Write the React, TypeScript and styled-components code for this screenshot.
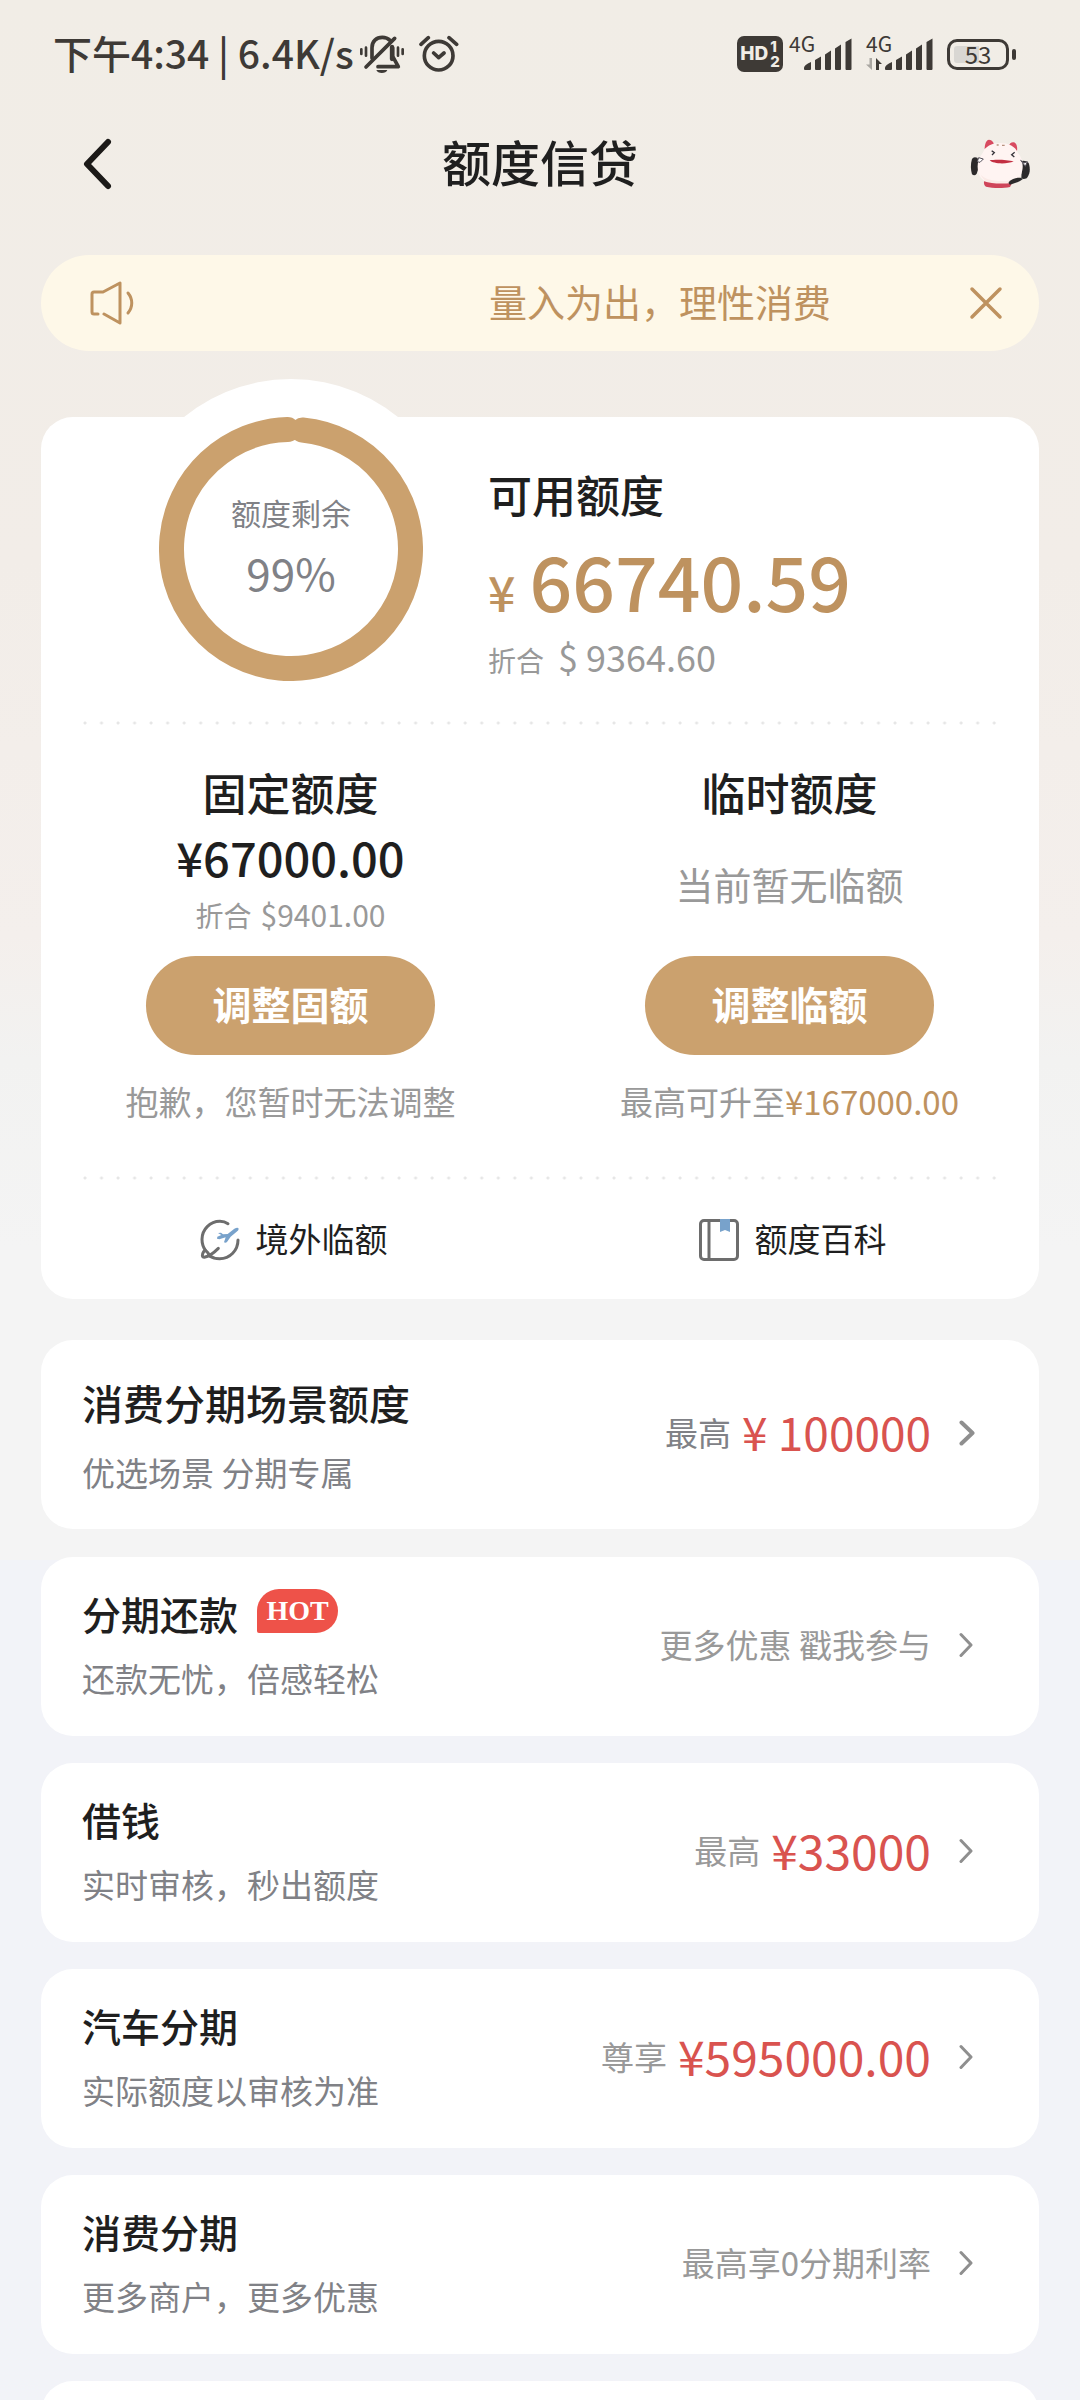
import React from 'react';
import styled, { createGlobalStyle } from 'styled-components';

const color = {
  ink: '#1f1f1f',
  status: '#3e3a36',
  gold: '#cba16e',
  goldText: '#be925f',
  slate: '#808186',
  grey: '#999999',
  red: '#d9534f',
};

const GlobalStyle = createGlobalStyle`
  *, *::before, *::after { box-sizing: border-box; }
  body {
    margin: 0;
    background: #f2f3f8;
    font-family: "Noto Sans CJK SC", "Noto Sans", sans-serif;
    color: ${color.ink};
  }
  h1, h2, h3, p { margin: 0; font-weight: inherit; font-size: inherit; }
  button { font: inherit; color: inherit; border: 0; padding: 0; background: none; cursor: pointer; }
  a { color: inherit; text-decoration: none; }
  svg { display: block; flex: none; }
`;

const Screen = styled.div`
  display: flex;
  flex-direction: column;
  height: 100vh;
  overflow-y: auto;
  scrollbar-width: none;
  background: #f2f3f8
    linear-gradient(#f1ede6 0%, #f2ede8 36%, #f4efec 60%, #f2f2f1 68%, #f4f4f4 80%, #f4f4f4 100%)
    no-repeat top / 100% 1560px;
`;

/* ---------- status bar ---------- */

const StatusBar = styled.div`
  display: flex;
  flex: none;
  align-items: center;
  justify-content: space-between;
  height: 108px;
  padding: 0 64px 0 53px;
  color: ${color.status};
`;

const StatusGroup = styled.div<{ $gap: number }>`
  display: flex;
  align-items: center;
  gap: ${(p) => p.$gap}px;
`;

const StatusText = styled.span`
  padding-bottom: 4px;
  font-size: 39px;
  line-height: 48px;
  font-weight: 500;
  white-space: nowrap;
`;

const HdBadge = styled.span`
  display: flex;
  align-items: center;
  justify-content: center;
  gap: 2px;
  width: 46px;
  height: 36px;
  margin-right: 6px;
  border-radius: 7px;
  background: ${color.status};
  color: #f1ede6;
  font-family: Inter, sans-serif;
  font-size: 19px;
  line-height: 36px;
  font-weight: 800;
`;

const HdStack = styled.span`
  display: flex;
  flex-direction: column;
  font-size: 15px;
  line-height: 15px;
`;

const Signal = styled.span`
  position: relative;
  display: block;
  margin-right: 14px;
`;

const SignalLabel = styled.span`
  position: absolute;
  top: -5px;
  left: 0;
  font-size: 21px;
  line-height: 24px;
`;

const Battery = styled.span`
  display: flex;
  align-items: center;
  gap: 3px;
  &::after {
    content: '';
    width: 4px;
    height: 11px;
    border-radius: 2px;
    background: ${color.status};
  }
`;

const BatteryShell = styled.span`
  display: block;
  width: 62px;
  height: 31px;
  border: 3px solid ${color.status};
  border-radius: 10px;
  background: linear-gradient(90deg, #d9d7d3 53%, transparent 53%) content-box;
  padding: 4px;
  font-size: 24px;
  line-height: 16px;
  text-align: center;
`;

function BellOffIcon() {
  return (
    <svg width="46" height="40" viewBox="30 27 138 120" fill="none" stroke={color.status} strokeWidth="11" strokeLinecap="round" strokeLinejoin="round">
      <path d="M34 73v14M48 68v24M144 68v24M158 73v14" strokeWidth="8" />
      <path d="M66 100V68c0-19 13-31 31-31 9 0 17 3 23 9" />
      <path d="M134 40 48 126" />
      <path d="M128 68v26l17 31H84" />
      <path d="M126 66v36" strokeWidth="13" />
      <path d="M79 135h33c-3 12-30 12-33 0z" fill={color.status} stroke="none" />
    </svg>
  );
}

function AlarmIcon() {
  return (
    <svg width="40" height="38" viewBox="207 30 120 114" fill="none" stroke={color.status} strokeWidth="11" strokeLinecap="round" strokeLinejoin="round">
      <circle cx="266" cy="92" r="43" />
      <path d="m251 84 15 14 16-14M213 58l22-20M297 38l23 20" />
    </svg>
  );
}

function SignalIcon({ arrows }: { arrows?: boolean }) {
  return (
    <svg width={arrows ? 67 : 63} height="36" viewBox={arrows ? '0 0 67 36' : '4 0 63 36'} fill={color.status}>
      {arrows && (
        <>
          <path d="M6 22v12L0 28.500h3.500V22z" fill="#aaa7a2" />
          <path d="M10 34V22l6 6h-3v6z" />
        </>
      )}
      <path d="M19 32q0-3 7-6v7q0 1-1 1h-5q-1 0-1-1zM30 24l6-3.500V33q0 1-1 1h-4q-1 0-1-1zM40 18.500l6-4V33q0 1-1 1h-4q-1 0-1-1zM50 12.500l6-4V33q0 1-1 1h-4q-1 0-1-1zM60.500 6l6-3.500V33q0 1-1 1h-4q-1 0-1-1z" />
    </svg>
  );
}

/* ---------- title bar ---------- */

const TitleBar = styled.header`
  display: grid;
  flex: none;
  grid-template-columns: 1fr auto 1fr;
  align-items: center;
  height: 112px;
  padding: 0 48px 0 80px;
`;

const PageTitle = styled.h1`
  margin: 0 16px 6px -16px;
  font-size: 49px;
  line-height: 60px;
  font-weight: 500;
`;

const IconButton = styled.button<{ $end?: boolean }>`
  display: flex;
  justify-self: ${(p) => (p.$end ? 'end' : 'start')};
`;

function MascotIcon() {
  return (
    <svg width="62" height="52" viewBox="18 21 186 156">
      <path d="M40 80q-12-4-16 4c-5 16-4 32 0 46q8 6 14-2l10-30z" fill="#2b2a2b" />
      <path d="M174 90q12-2 20 6c6 18 4 34-6 46q-10 4-16 0z" fill="#2b2a2b" />
      <path d="M62 54c0-16 5-27 13-28 9 0 16 9 16 20zM134 46c2-8 8-13 15-12 8 2 12 12 10 26z" fill="#d84a60" />
      <path d="M108 36c26 0 46 10 54 30 14 16 18 42 10 62-6 18-28 32-66 32-36 0-56-14-62-32-7-24-2-46 12-62 8-20 26-30 52-30z" fill="#fff4f2" />
      <path d="M50 130c12 22 90 30 118 4-8 18-28 26-62 26-32 0-50-12-56-30z" fill="#fbeae6" />
      <path d="M60 151c22 8 56 8 84 5l-6 12c-20 4-52 4-72-1-5-3-7-9-6-16z" fill="#cf4459" />
      <path d="M135 152c8-8 20-12 32-12 4 0 8 2 9 5-10 8-22 12-38 16-4-2-5-6-3-9z" fill="#2b2a2b" />
      <path d="M77 88c16-3 52-2 72 3-18 9-60 9-72-3z" fill="#c32f42" />
      <path d="m83 59 8 6-7 7M152 64l-9 7 8 7" fill="none" stroke="#37343a" strokeWidth="4" />
      <path d="M98 42h6M114 43h8" stroke="#b7927e" strokeWidth="4" />
      <path d="m40 92 4-12 14 4-10 10zM170 88l10 8 10-4-6 14z" fill="#fff" stroke="#55505a" strokeWidth="3" />
    </svg>
  );
}

/* ---------- notice ---------- */

const Content = styled.main`
  display: flex;
  flex: none;
  flex-direction: column;
  padding: 35px 41px 0;
`;

const Notice = styled.div`
  display: flex;
  align-items: center;
  height: 96px;
  padding: 0 36px 0 48px;
  border-radius: 48px;
  background: #fef8e8;
  color: ${color.goldText};
`;

const NoticeText = styled.p`
  flex: 1;
  padding: 0 0 4px 354px;
  font-size: 38px;
  line-height: 48px;
  white-space: nowrap;
`;

/* ---------- credit card panel ---------- */

const Panel = styled.section`
  display: flex;
  flex-direction: column;
  margin-top: 66px;
  border-radius: 32px;
  background: #fff;
`;

const Summary = styled.div`
  display: flex;
  gap: 65px;
  padding-left: 118px;
`;

const Gauge = styled.div`
  position: relative;
  width: 264px;
  height: 264px;
  &::before {
    content: '';
    position: absolute;
    inset: -38px;
    border-radius: 50%;
    background: #fff;
  }
  svg { position: relative; }
`;

const GaugeLabel = styled.div`
  position: absolute;
  inset: 0;
  display: flex;
  flex-direction: column;
  align-items: center;
  padding-top: 73px;
  color: ${color.slate};
  font-size: 30px;
  line-height: 44px;
`;

const GaugeValue = styled.span`
  margin-top: 10px;
  font-size: 44px;
  line-height: 56px;
`;

const Available = styled.div`
  position: relative;
  padding-top: 47px;
`;

const Heading = styled.h2`
  font-size: 44px;
  line-height: 60px;
  font-weight: 500;
`;

const AvailableAmount = styled.p`
  display: flex;
  align-items: baseline;
  gap: 14px;
  height: 88px;
  margin-top: 12px;
  font-size: 75px;
  line-height: 88px;
  font-weight: 500;
  color: ${color.goldText};
`;

const Currency = styled.span`
  font-size: 48px;
  line-height: 48px;
`;

const Converted = styled.p<{ $wide?: boolean }>`
  display: flex;
  align-items: baseline;
  gap: ${(p) => (p.$wide ? 14 : 9)}px;
  height: 40px;
  margin-top: ${(p) => (p.$wide ? 16 : 8)}px;
  font-size: 28px;
  line-height: 40px;
  color: ${color.grey};
  span {
    font-size: ${(p) => (p.$wide ? 36 : 30)}px;
    line-height: 32px;
  }
`;

const DottedLine = styled.hr<{ $top: number }>`
  width: calc(100% - 84px);
  height: 4px;
  margin: ${(p) => p.$top}px auto 0;
  border: 0;
  background: radial-gradient(circle at 2px 2px, #e6e6e6 1px, transparent 2px) 0 0 / calc((100% - 4px) / 55) 4px;
`;

const Columns = styled.div`
  display: grid;
  grid-template-columns: 1fr 1fr;
`;

const Limit = styled.div`
  display: flex;
  flex-direction: column;
  align-items: center;
  padding-top: 37px;
`;

const LimitAmount = styled.p`
  margin-top: 5px;
  font-size: 47px;
  line-height: 60px;
  font-weight: 500;
`;

const EmptyLimit = styled.p`
  height: 113px;
  padding-top: 38px;
  font-size: 38px;
  line-height: 48px;
  color: ${color.grey};
`;

const PillButton = styled.button`
  width: 289px;
  height: 99px;
  margin-top: 21px;
  padding-bottom: 5px;
  border-radius: 50px;
  background: ${color.gold};
  color: #fff;
  font-size: 39px;
  font-weight: 700;
`;

const LimitNote = styled.p`
  margin-top: 22px;
  font-size: 33px;
  line-height: 48px;
  white-space: nowrap;
  color: ${color.grey};
  em { font-style: normal; color: ${color.goldText}; }
`;

const QuickLink = styled.a`
  display: flex;
  align-items: center;
  justify-content: center;
  gap: 16px;
  height: 119px;
  font-size: 33px;
  line-height: 48px;
`;

const QuickText = styled.span`
  margin-bottom: 4px;
`;

function PlaneIcon() {
  return (
    <svg width="46" height="42" viewBox="9 27 138 126" fill="none" stroke="#6d6d6d" strokeWidth="9" strokeLinecap="round" strokeLinejoin="round">
      <path d="M111 41C102 35 94 34 87 34 57 34 33 58 33 88c0 13 4 25 11 34" />
      <path d="M141 90c0 31-24 56-55 56-12 0-22-3-31-9" />
      <path d="M82 115c-13 13-27 24-42 27-7 0-8-8-2-17 4-6 10-4 18 13" />
      <path d="m81 69 9-1 6 5 14-1 20-16q12-6 13 1 0 4-7 9l-17 14-11 16q-4 4-9 1l5-15-19 6-7-2 1-6 12-5z" fill="#78a2cb" stroke="none" />
    </svg>
  );
}

function BookIcon() {
  return (
    <svg width="46" height="42" viewBox="0 0 46 42" fill="none">
      <rect x="7.500" y="1.500" width="37" height="39" rx="3.500" stroke="#6d6d6d" strokeWidth="3" />
      <path d="M16 2v38" stroke="#6d6d6d" strokeWidth="3" />
      <path d="M27 0h10v13l-5-2-5 2z" fill="#78a2cb" />
    </svg>
  );
}

/* ---------- product list ---------- */

const ProductList = styled.div`
  display: flex;
  flex-direction: column;
  gap: 27px;
  margin-top: 41px;
`;

const Product = styled.a<{ $featured?: boolean }>`
  display: flex;
  align-items: center;
  justify-content: space-between;
  min-height: ${(p) => (p.$featured ? 189 : 179)}px;
  margin-bottom: ${(p) => (p.$featured ? 1 : 0)}px;
  padding: 0 ${(p) => (p.$featured ? 64 : 66)}px 0 41px;
  border-radius: 32px;
  background: #fff;
`;

const ProductText = styled.div<{ $featured?: boolean }>`
  display: flex;
  flex-direction: column;
  gap: ${(p) => (p.$featured ? 22 : 17)}px;
  padding-bottom: ${(p) => (p.$featured ? 0 : 6)}px;
`;

const ProductTitle = styled.h3<{ $featured?: boolean }>`
  display: flex;
  gap: 19px;
  font-size: ${(p) => (p.$featured ? 41 : 39)}px;
  line-height: 52px;
  font-weight: 500;
`;

const HotBadge = styled.span`
  width: 81px;
  height: 44px;
  margin-top: 2px;
  border-radius: 22px 22px 22px 2px;
  background: #ee5249;
  color: #fff;
  font: 700 28px/44px "Liberation Serif", serif;
  text-align: center;
`;

const ProductSub = styled.p`
  font-size: 33px;
  line-height: 44px;
  color: ${color.slate};
`;

const Offer = styled.div<{ $featured?: boolean }>`
  display: flex;
  align-items: center;
  margin-bottom: 3px;
  font-size: 33px;
  line-height: 48px;
  color: ${(p) => (p.$featured ? color.slate : color.grey)};
  svg { margin-left: 28px; }
`;

const OfferLabel = styled.span`
  margin-bottom: 3px;
`;

const OfferAmount = styled.strong<{ $featured?: boolean }>`
  margin: 0 0 4px 11px;
  font-size: ${(p) => (p.$featured ? 46 : 48)}px;
  font-weight: 400;
  color: ${color.red};
`;

function Chevron({ bold }: { bold?: boolean }) {
  return (
    <svg width={bold ? 16 : 14} height="26" viewBox={bold ? '0 0 16 26' : '0 0 14 26'} fill="none" stroke="#8f8f8f" strokeWidth={bold ? 4 : 3} strokeLinecap="round" strokeLinejoin="round">
      <path d={bold ? 'M2.500 2.500 13.500 13 2.500 23.500' : 'M2 2.500 12 13 2 23.500'} />
    </svg>
  );
}

interface ProductInfo {
  title: string;
  sub: string;
  label: string;
  amount?: string;
  hot?: boolean;
  featured?: boolean;
}

const products: ProductInfo[] = [
  { title: '消费分期场景额度', sub: '优选场景 分期专属', label: '最高', amount: '¥ 100000', featured: true },
  { title: '分期还款', sub: '还款无忧，倍感轻松', label: '更多优惠 戳我参与', hot: true },
  { title: '借钱', sub: '实时审核，秒出额度', label: '最高', amount: '¥33000' },
  { title: '汽车分期', sub: '实际额度以审核为准', label: '尊享', amount: '¥595000.00' },
  { title: '消费分期', sub: '更多商户，更多优惠', label: '最高享0分期利率' },
];

export default function App() {
  return (
    <Screen>
      <GlobalStyle />
      <StatusBar>
        <StatusGroup $gap={6}>
          <StatusText>下午4:34 | 6.4K/s</StatusText>
          <StatusGroup $gap={13}>
            <BellOffIcon />
            <AlarmIcon />
          </StatusGroup>
        </StatusGroup>
        <StatusGroup $gap={0}>
          <HdBadge>
            HD
            <HdStack>
              <span>1</span>
              <span>2</span>
            </HdStack>
          </HdBadge>
          <Signal>
            <SignalIcon />
            <SignalLabel>4G</SignalLabel>
          </Signal>
          <Signal>
            <SignalIcon arrows />
            <SignalLabel>4G</SignalLabel>
          </Signal>
          <Battery>
            <BatteryShell>53</BatteryShell>
          </Battery>
        </StatusGroup>
      </StatusBar>

      <TitleBar>
        <IconButton type="button" aria-label="返回">
          <svg width="34" height="56" viewBox="0 0 34 56" fill="none" stroke="#1c1a18" strokeWidth="6" strokeLinecap="round" strokeLinejoin="round">
            <path d="M28 6 7 28l21 22" />
          </svg>
        </IconButton>
        <PageTitle>额度信贷</PageTitle>
        <IconButton type="button" aria-label="客服" $end>
          <MascotIcon />
        </IconButton>
      </TitleBar>

      <Content>
        <Notice>
          <svg width="46" height="44" viewBox="0 0 46 44" fill="none" stroke={color.goldText} strokeWidth="3" strokeLinecap="round" strokeLinejoin="round">
            <path d="M9 33H5q-2 0-2-2V13q0-2 2-2h9L31 2v40L15 33" />
            <path d="M39 12c5 6 5 14 0 20" />
          </svg>
          <NoticeText>量入为出，理性消费</NoticeText>
          <IconButton type="button" aria-label="关闭" $end>
            <svg width="34" height="34" viewBox="0 0 34 34" fill="none" stroke={color.goldText} strokeWidth="3.500" strokeLinecap="round">
              <path d="m3 3 28 28M31 3 3 31" />
            </svg>
          </IconButton>
        </Notice>

        <Panel>
          <Summary>
            <Gauge>
              <svg width="264" height="264" viewBox="0 0 264 264" fill="none">
                <circle
                  cx="132"
                  cy="132"
                  r="119.500"
                  stroke={color.gold}
                  strokeWidth="25"
                  strokeLinecap="round"
                  pathLength={100}
                  strokeDasharray="98 2"
                  transform="rotate(-84.500 132 132)"
                />
              </svg>
              <GaugeLabel>
                额度剩余
                <GaugeValue>99%</GaugeValue>
              </GaugeLabel>
            </Gauge>
            <Available>
              <Heading>可用额度</Heading>
              <AvailableAmount>
                <Currency>¥</Currency>66740.59
              </AvailableAmount>
              <Converted $wide>
                折合<span>$ 9364.60</span>
              </Converted>
            </Available>
          </Summary>

          <DottedLine $top={40} />

          <Columns>
            <Limit>
              <Heading>固定额度</Heading>
              <LimitAmount>¥67000.00</LimitAmount>
              <Converted>
                折合<span>$9401.00</span>
              </Converted>
              <PillButton type="button">调整固额</PillButton>
              <LimitNote>抱歉，您暂时无法调整</LimitNote>
            </Limit>
            <Limit>
              <Heading>临时额度</Heading>
              <EmptyLimit>当前暂无临额</EmptyLimit>
              <PillButton type="button">调整临额</PillButton>
              <LimitNote>
                最高可升至<em>¥167000.00</em>
              </LimitNote>
            </Limit>
          </Columns>

          <DottedLine $top={51} />

          <Columns>
            <QuickLink href="#overseas">
              <PlaneIcon />
              <QuickText>境外临额</QuickText>
            </QuickLink>
            <QuickLink href="#guide">
              <BookIcon />
              <QuickText>额度百科</QuickText>
            </QuickLink>
          </Columns>
        </Panel>

        <ProductList>
          {products.map((p) => (
            <Product key={p.title} href="#product" $featured={p.featured}>
              <ProductText $featured={p.featured}>
                <ProductTitle $featured={p.featured}>
                  {p.title}
                  {p.hot && <HotBadge>HOT</HotBadge>}
                </ProductTitle>
                <ProductSub>{p.sub}</ProductSub>
              </ProductText>
              <Offer $featured={p.featured}>
                <OfferLabel>{p.label}</OfferLabel>
                {p.amount && <OfferAmount $featured={p.featured}>{p.amount}</OfferAmount>}
                <Chevron bold={p.featured} />
              </Offer>
            </Product>
          ))}
          <Product as="div" />
        </ProductList>
      </Content>
    </Screen>
  );
}
